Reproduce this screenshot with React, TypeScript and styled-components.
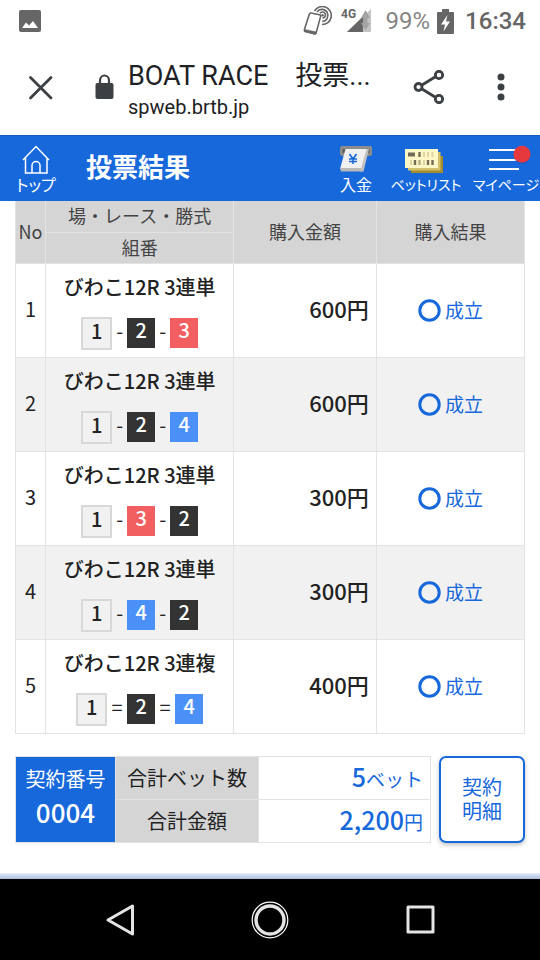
import React from "react";
import styled, { createGlobalStyle, css } from "styled-components";

const BLUE = "#1768da";
const LINE = "#e3e3e3";

const GlobalStyle = createGlobalStyle`
  * { box-sizing: border-box; }
  body {
    margin: 0;
    background: #fff;
    color: #222;
    font-family: "Noto Sans CJK JP", sans-serif;
  }
  button { font: inherit; color: inherit; background: none; border: 0; padding: 0; cursor: pointer; }
  a { color: inherit; text-decoration: none; }
  svg { display: block; flex: none; }
`;

const Screen = styled.div`
  min-height: 100vh;
  display: flex;
  flex-direction: column;
`;

const StatusBar = styled.div`
  display: flex;
  align-items: center;
  height: 42px;
  padding: 0 14px 0 19px;
  font: 500 24px/28px Roboto, sans-serif;
  color: #666;
`;

const StatusIcons = styled.div`
  display: flex;
  align-items: center;
  margin-left: auto;
`;

const SignalSlot = styled.span`
  margin-left: 8px;
`;

const Battery = styled.span`
  margin: 0 7px 0 13px;
  font-weight: 400;
  color: #858585;
`;

const Clock = styled.time`
  margin-left: 11px;
`;

const BrowserBar = styled.header`
  display: flex;
  align-items: center;
  height: 93px;
  padding: 0 35px 3px 27px;
  color: #3c4043;
`;

const IconButton = styled.button`
  display: flex;
  align-items: center;
  justify-content: center;
`;

const LockSlot = styled.span`
  margin-left: 41px;
`;

const PageInfo = styled.div`
  flex: 1;
  min-width: 0;
  margin: 0 40px 0 14px;
  padding-top: 6px;
  color: #202124;
  font-family: Roboto, "Noto Sans CJK JP", sans-serif;
  white-space: nowrap;
`;

const PageTitle = styled.div`
  font-size: 27px;
  line-height: 34px;
`;

const PageHost = styled.div`
  font-size: 20px;
  line-height: 28px;
`;

const BrowserActions = styled.div`
  display: flex;
  gap: 52px;
`;

const AppBar = styled.header`
  display: flex;
  align-items: stretch;
  height: 66px;
  background: ${BLUE};
  border-top: 1px solid #175ab8;
  color: #fff;
`;

const AppTitle = styled.h1`
  flex: 1;
  align-self: center;
  margin: 0;
  padding-bottom: 5px;
  font-size: 26px;
  line-height: 36px;
  font-weight: 700;
`;

const AppNav = styled.nav`
  display: flex;
  gap: 10px;
`;

const NavLink = styled.a<{ $width: number; $small?: boolean }>`
  display: flex;
  flex-direction: column;
  align-items: center;
  justify-content: flex-end;
  width: ${(p) => p.$width}px;
  padding-bottom: 7px;
  font-size: ${(p) => (p.$small ? 14 : 16)}px;
  line-height: 20px;
  font-feature-settings: "palt";
  white-space: nowrap;
`;

const HomeLink = styled(NavLink)`
  margin: 0 14px 0 0;
`;

const Main = styled.main`
  flex: 1;
  padding: 0 15px 30px;
`;

const ResultTable = styled.table`
  width: 100%;
  table-layout: fixed;
  border-collapse: collapse;
`;

const Col = styled.col<{ $width?: string }>`
  width: ${(p) => p.$width ?? "auto"};
`;

const HeadCell = styled.th`
  height: 31px;
  padding: 0 0 2px;
  border: 1px solid ${LINE};
  border-top: 0;
  background: #d5d5d5;
  color: #444;
  font-size: 18px;
  line-height: 24px;
  font-weight: 400;
`;

const BodyRow = styled.tr`
  background: #fff;
  &:nth-child(even) { background: #f1f1f1; }
`;

const cell = css`
  padding: 0;
  border: 1px solid ${LINE};
`;

const NumberCell = styled.td`
  ${cell}
  padding-bottom: 3px;
  font-size: 20px;
  text-align: center;
`;

const BetCell = styled.td`
  ${cell}
  padding: 9px 0 7px;
  text-align: center;
`;

const BetName = styled.div`
  font-size: 20px;
  line-height: 28px;
  font-weight: 500;
`;

const Combo = styled.div`
  display: flex;
  align-items: center;
  justify-content: center;
  height: 33px;
  margin-top: 16px;
  font-size: 20px;
  line-height: 24px;
  font-weight: 500;
`;

const Separator = styled.span<{ $wide: boolean }>`
  width: ${(p) => (p.$wide ? 20 : 15)}px;
  padding-bottom: 4px;
  font-weight: 400;
  text-align: center;
`;

const boatColors: Record<number, string> = { 1: "#f1f1f1", 2: "#333", 3: "#f25f60", 4: "#4a90f7" };

const Boat = styled.span<{ $boat: number }>`
  width: 28px;
  height: 30px;
  background: ${(p) => boatColors[p.$boat]};
  color: #fff;
  ${(p) =>
    p.$boat === 1 &&
    css`
      width: 31px;
      height: 33px;
      border: 2px solid #d8d8d8;
      color: #222;
    `}
`;

const AmountCell = styled.td`
  ${cell}
  padding: 0 7px 4px 0;
  font-size: 22px;
  font-weight: 500;
  text-align: right;
`;

const ResultCell = styled.td`
  ${cell}
`;

const Accepted = styled.div`
  display: flex;
  align-items: center;
  justify-content: center;
  gap: 4px;
  color: ${BLUE};
  font-size: 19px;
  line-height: 28px;
`;

const Footer = styled.section`
  display: flex;
  gap: 8px;
  margin-top: 22px;
`;

const SummaryTable = styled.table`
  flex: 1;
  min-width: 0;
  table-layout: fixed;
  border-collapse: collapse;
`;

const ContractCell = styled.th`
  ${cell}
  padding-bottom: 4px;
  background: ${BLUE};
  color: #fff;
  font-size: 20px;
  line-height: 28px;
  font-weight: 400;
`;

const ContractNumber = styled.div`
  margin-top: 2px;
  font-size: 26px;
  line-height: 34px;
  font-weight: 500;
`;

const SummaryLabel = styled.th`
  ${cell}
  height: 43px;
  background: #d5d5d5;
  font-size: 20px;
  line-height: 28px;
  font-weight: 400;
`;

const SummaryValue = styled.td`
  ${cell}
  padding-right: 7px;
  color: ${BLUE};
  font-size: 19px;
  line-height: 36px;
  text-align: right;
`;

const Total = styled.strong`
  font-size: 25px;
  font-weight: 500;
`;

const DetailButton = styled.button`
  width: 86px;
  border: 2px solid ${BLUE};
  border-radius: 7px;
  background: #fff;
  box-shadow: 0 2px 4px rgba(0, 0, 0, 0.25);
  color: ${BLUE};
  font-size: 20px;
`;

const ButtonLine = styled.span`
  display: block;
  line-height: 24px;
`;

const BottomEdge = styled.div`
  height: 6px;
  background: linear-gradient(#e6eefa, #a9bcd8);
`;

const SystemNav = styled.nav`
  display: grid;
  grid-template-columns: repeat(3, 150px);
  justify-content: center;
  align-items: center;
  height: 81px;
  background: #000;
`;

const SystemButton = styled(IconButton)`
  height: 100%;
`;

type Bet = { type: string; boats: number[]; amount: string };

const bets: Bet[] = [
  { type: "3連単", boats: [1, 2, 3], amount: "600円" },
  { type: "3連単", boats: [1, 2, 4], amount: "600円" },
  { type: "3連単", boats: [1, 3, 2], amount: "300円" },
  { type: "3連単", boats: [1, 4, 2], amount: "300円" },
  { type: "3連複", boats: [1, 2, 4], amount: "400円" },
];

const PictureIcon = () => (
  <svg width="22" height="22" viewBox="0 0 22 22">
    <rect width="22" height="22" rx="2" fill="#666" />
    <path d="M3 18 L7 12.5 L10 15.5 L14 11 L19 18 Z" fill="#fff" />
  </svg>
);

const TapIcon = () => (
  <svg width="30" height="30" viewBox="0 0 30 30" fill="none" stroke="#666">
    <path d="M8 7 L16.5 8.8 Q18 9.2 17.6 10.4 L13.2 26.6 Q12.8 28.2 11.4 27.8 L2.3 25.4 Q1 25 1.4 23.6 L6.4 8 Q6.8 6.8 8 7 Z" strokeWidth="1.6" />
    <path d="M1.6 23.4 L13.6 26 L12.4 28.4 L1.4 25.6 Z" fill="#666" strokeWidth="0.6" />
    <g strokeWidth="1.6">
      <path d="M19.5 12 A3 3 0 1 0 17 7.3" />
      <path d="M19.3 15.4 A6 6 0 1 0 14 6" />
      <path d="M19 18.5 A9 9 0 1 0 11.500 5" />
    </g>
    <circle cx="19.5" cy="9.2" r="1.3" fill="#666" stroke="none" />
  </svg>
);

const SignalIcon = () => (
  <svg width="32" height="26" viewBox="0 0 32 26">
    <text x="0" y="10" fontSize="12" fontWeight="700" fontFamily="Roboto, sans-serif" fill="#666">4G</text>
    <path d="M6 24 L30 1 V24 Z" fill="#c4c4c4" />
    <path d="M6 24 L22 8.5 V24 Z" fill="#666" />
    <path d="M20 10 L24.5 2 L29 10 H26.5 V15 H29 L24.5 22 L20 15 H22 V10 Z" fill="#a3a3a3" />
  </svg>
);

const BatteryIcon = () => (
  <svg width="17" height="25" viewBox="0 0 17 25">
    <path d="M5 0 H12 V3 H16 Q17 3 17 4 V24 Q17 25 16 25 H1 Q0 25 0 24 V4 Q0 3 1 3 H5 Z" fill="#666" />
    <path d="M10.5 6 L4 15.5 H8 L6.5 22.5 L13 12.5 H9 Z" fill="#fff" />
  </svg>
);

const CloseIcon = () => (
  <svg width="27" height="27" viewBox="0 0 27 27" stroke="#3c4043" strokeWidth="2.8" strokeLinecap="round">
    <path d="M3.5 3.5 L24 24 M24 3.5 L3.5 24" />
  </svg>
);

const LockIcon = () => (
  <svg width="19" height="26" viewBox="0 0 19 26">
    <path d="M5 11 V6.5 a4.5 5 0 0 1 9 0 V11" fill="none" stroke="#3c4043" strokeWidth="2.2" />
    <rect x="0.5" y="9" width="18" height="16" rx="2" fill="#3c4043" />
  </svg>
);

const ShareIcon = () => (
  <svg width="32" height="34" viewBox="0 0 32 34" fill="none" stroke="#3c4043" strokeWidth="2.8">
    <path d="M9 15 L22 7 M9 19 L22 27" />
    <circle cx="5.5" cy="17" r="3.5" />
    <circle cx="26" cy="5" r="3.7" />
    <circle cx="26" cy="29" r="3.7" />
  </svg>
);

const MoreIcon = () => (
  <svg width="8" height="28" viewBox="0 0 8 28" fill="#3c4043">
    <circle cx="4" cy="4" r="3.5" />
    <circle cx="4" cy="14" r="3.5" />
    <circle cx="4" cy="24" r="3.5" />
  </svg>
);

const HomeIcon = () => (
  <svg width="28" height="29" viewBox="0 0 28 29" fill="none" stroke="#fff" strokeWidth="1.5">
    <path d="M1 15 L14 1.5 L27 15 M3.5 13 V28 H25 V13 M10 28 V20.500 a4 4 0 0 1 8 0 V28" />
  </svg>
);

const DepositIcon = () => (
  <svg width="34" height="29" viewBox="0 -1 34 29">
    <rect x="1" y="0" width="32" height="10" rx="2" fill="#8d8d8d" />
    <rect x="3.5" y="3" width="27" height="4" fill="#5d5d5d" />
    <path d="M26 3 H30 L24.5 25.5 H21 Z" fill="#c0c0c0" />
    <path d="M6.5 3 H27.5 L22 23 H1 Z" fill="#f0f0f0" />
    <path d="M1 22 H22 L23 25.5 H2 Z" fill="#b9b9b9" />
    <path d="M10.5 8 L14 13 L17.5 8 M14 13 V18 M10 13 H18 M10 15.5 H18" fill="none" stroke={BLUE} strokeWidth="1.6" />
  </svg>
);

const BetListIcon = () => (
  <svg width="44" height="26" viewBox="0 0 44 26">
    <path d="M7 8 H39 V25 H7 Z" fill="#a58c2c" />
    <path d="M4 4 H36.500 V22.5 H4 Z" fill="#d2c16a" />
    <path d="M1 1 H34 V20 H1 Z" fill="#fff7c6" />
    <path d="M4 4.5 H11 V8.5 H4 Z" fill="#6f6957" />
    <path d="M15.5 4 V9 M11 12 V17 M24 12 V17 M28.5 12 V17" stroke="#746d58" strokeWidth="2.4" />
    <path d="M20 4 V9 M24 4 V9 M28.5 4 V9 M7 12 V17 M20 12 V17" stroke="#dfd4a0" strokeWidth="2" />
    <path d="M15.5 12 V17" stroke="#b7ad83" strokeWidth="2.4" />
  </svg>
);

const MyPageIcon = () => (
  <svg width="50" height="29" viewBox="0 0 50 29">
    <path d="M8 5 H38 M8 15 H38 M8 24 H38" stroke="#fff" strokeWidth="2" />
    <circle cx="41" cy="10.5" r="8.5" fill="#0f51b5" opacity="0.4" />
    <circle cx="41" cy="9.2" r="8.5" fill="#e5393e" />
  </svg>
);

const CircleIcon = () => (
  <svg width="23" height="23" viewBox="0 0 23 23">
    <circle cx="11.5" cy="11.5" r="9.7" fill="none" stroke={BLUE} strokeWidth="3" />
  </svg>
);

export default function App() {
  return (
    <Screen>
      <GlobalStyle />
      <StatusBar>
        <PictureIcon />
        <StatusIcons>
          <TapIcon />
          <SignalSlot><SignalIcon /></SignalSlot>
          <Battery>99%</Battery>
          <BatteryIcon />
          <Clock>16:34</Clock>
        </StatusIcons>
      </StatusBar>

      <BrowserBar>
        <IconButton aria-label="閉じる"><CloseIcon /></IconButton>
        <LockSlot><LockIcon /></LockSlot>
        <PageInfo>
          <PageTitle>BOAT RACE　投票...</PageTitle>
          <PageHost>spweb.brtb.jp</PageHost>
        </PageInfo>
        <BrowserActions>
          <IconButton aria-label="共有"><ShareIcon /></IconButton>
          <IconButton aria-label="メニュー"><MoreIcon /></IconButton>
        </BrowserActions>
      </BrowserBar>

      <AppBar>
        <HomeLink href="#top" $width={72}><HomeIcon />トップ</HomeLink>
        <AppTitle>投票結果</AppTitle>
        <AppNav>
          <NavLink href="#deposit" $width={48}><DepositIcon />入金</NavLink>
          <NavLink href="#betlist" $width={72} $small><BetListIcon />ベットリスト</NavLink>
          <NavLink href="#mypage" $width={68} $small><MyPageIcon />マイページ</NavLink>
        </AppNav>
      </AppBar>

      <Main>
        <ResultTable>
          <colgroup>
            <Col $width="30px" />
            <Col $width="37%" />
            <Col $width="28%" />
            <Col />
          </colgroup>
          <thead>
            <tr>
              <HeadCell rowSpan={2} scope="col">No</HeadCell>
              <HeadCell scope="col">場・レース・勝式</HeadCell>
              <HeadCell rowSpan={2} scope="col">購入金額</HeadCell>
              <HeadCell rowSpan={2} scope="col">購入結果</HeadCell>
            </tr>
            <tr>
              <HeadCell scope="col">組番</HeadCell>
            </tr>
          </thead>
          <tbody>
            {bets.map((bet, i) => {
              const box = bet.type === "3連複";
              return (
                <BodyRow key={i}>
                  <NumberCell>{i + 1}</NumberCell>
                  <BetCell>
                    <BetName>びわこ12R {bet.type}</BetName>
                    <Combo>
                      {bet.boats.map((boat, n) => (
                        <React.Fragment key={boat}>
                          {n > 0 && <Separator $wide={box}>{box ? "=" : "-"}</Separator>}
                          <Boat $boat={boat}>{boat}</Boat>
                        </React.Fragment>
                      ))}
                    </Combo>
                  </BetCell>
                  <AmountCell>{bet.amount}</AmountCell>
                  <ResultCell>
                    <Accepted><CircleIcon />成立</Accepted>
                  </ResultCell>
                </BodyRow>
              );
            })}
          </tbody>
        </ResultTable>

        <Footer>
          <SummaryTable>
            <colgroup>
              <Col $width="100px" />
              <Col $width="143px" />
              <Col />
            </colgroup>
            <tbody>
              <tr>
                <ContractCell rowSpan={2}>
                  契約番号
                  <ContractNumber>0004</ContractNumber>
                </ContractCell>
                <SummaryLabel scope="row">合計ベット数</SummaryLabel>
                <SummaryValue><Total>5</Total>ベット</SummaryValue>
              </tr>
              <tr>
                <SummaryLabel scope="row">合計金額</SummaryLabel>
                <SummaryValue><Total>2,200</Total>円</SummaryValue>
              </tr>
            </tbody>
          </SummaryTable>
          <DetailButton>
            <ButtonLine>契約</ButtonLine>
            <ButtonLine>明細</ButtonLine>
          </DetailButton>
        </Footer>
      </Main>

      <BottomEdge />
      <SystemNav>
        <SystemButton aria-label="戻る">
          <svg width="38" height="38" viewBox="0 0 38 38" fill="none" stroke="#e4e4e4" strokeWidth="3" strokeLinejoin="round">
            <path d="M31.5 5 V33 L7 19 Z" />
          </svg>
        </SystemButton>
        <SystemButton aria-label="ホーム">
          <svg width="38" height="38" viewBox="0 0 38 38" fill="none">
            <circle cx="19" cy="19" r="17.8" stroke="#fff" strokeWidth="1.2" />
            <circle cx="19" cy="19" r="14" stroke="#e4e4e4" strokeWidth="3.4" />
          </svg>
        </SystemButton>
        <SystemButton aria-label="アプリ一覧">
          <svg width="38" height="38" viewBox="0 0 38 38" fill="none" stroke="#e4e4e4" strokeWidth="3" strokeLinejoin="round">
            <rect x="7" y="6" width="25" height="25" />
          </svg>
        </SystemButton>
      </SystemNav>
    </Screen>
  );
}
